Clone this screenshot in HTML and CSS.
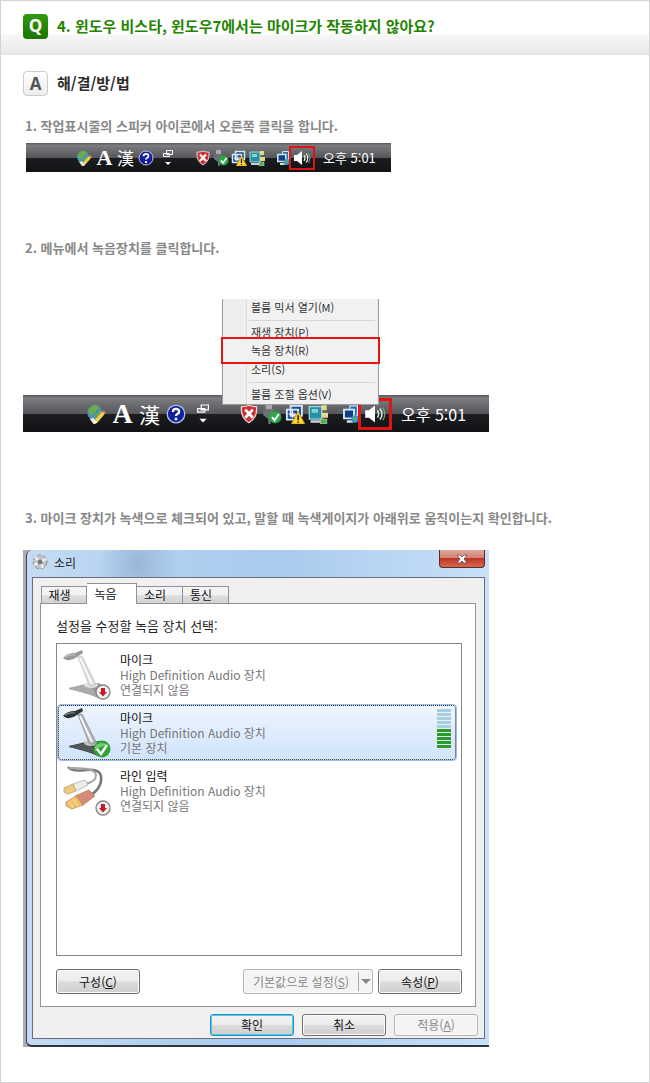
FILE: index.html
```
<!DOCTYPE html>
<html lang="ko">
<head>
    <meta charset="UTF-8">
    <meta name="viewport" content="width=device-width, initial-scale=1.0">
    <title>마이크가 작동하지 않아요?</title>
    <link rel="stylesheet" href="styles.css">
</head>
<body>
    <!-- shared icons -->
    <svg class="sprite" aria-hidden="true">
        <symbol id="globe" viewBox="0 0 16 16">
            <circle cx="7" cy="7" r="6" fill="#4a8fc4"/>
            <path d="M2 4l3-3 4 0 2 2-3 2-1 3-3 1-2-2zM8 8l4-3 1 3-3 4-3-1z" fill="#6aab4c"/>
            <path d="M3 12l3-1 3 4-3 1z" fill="#e8e4d8"/>
            <path d="M7 13l6-7 2 2-6 7-3 1z" fill="#f3cf54"/>
            <path d="M13 6l1-1 2 2-1 1z" fill="#e77c62"/>
            <path d="M7 13l2 2-3 1z" fill="#fff"/>
        </symbol>
        <symbol id="help" viewBox="0 0 16 16">
            <circle cx="8" cy="8" r="7" fill="#12209c" stroke="#b9c4e8"/>
            <path d="M5.500 6.300q0-2.500 2.500-2.500t2.500 2.200q0 1.300-1.500 2-1 .5-1 1.500" fill="none" stroke="#fff" stroke-width="1.800"/>
            <path d="M7 11h2v2H7z" fill="#fff"/>
        </symbol>
        <symbol id="toggle" viewBox="0 0 10 16">
            <path d="M3.500 .5h6v4h-6zM.5 3.500h6v3h-6z" fill="#666" stroke="#fff"/>
            <path d="M2 12h6l-3 3z" fill="#fff"/>
        </symbol>
        <symbol id="shield" viewBox="0 0 16 16">
            <path d="M8 1q3 1.500 6 1 1 9-6 13Q1 11 2 2q3 .5 6-1z" fill="#d22d33" stroke="#e9d4d4"/>
            <path d="M5 4.500l6 6.500M11 4.500L5 11" stroke="#fff" stroke-width="2.200"/>
        </symbol>
        <symbol id="usb" viewBox="0 0 16 16">
            <path d="M3 0h5v4H3z" fill="#a9a9b2"/>
            <path d="M1 4h9v5l-3 3v4H5v-4L1 9z" fill="#6d6f75"/>
            <circle cx="10.500" cy="10.500" r="5" fill="#2ba548"/>
            <path d="M8 10.500l2 2.500 3.500-5" fill="none" stroke="#fff" stroke-width="1.600"/>
        </symbol>
        <symbol id="alert" viewBox="0 0 16 16">
            <path d="M4.500 1.500h9v8h-9zM1.500 4.500h9v8h-9z" fill="#1d4b8c" stroke="#d4e8fa" stroke-width="1.500"/>
            <path d="M6 5v6M3 8h6" stroke="#fff"/>
            <path d="M10.500 6l5.500 10H5z" fill="#ffd42e" stroke="#b58300" stroke-width=".5"/>
            <path d="M10.500 9v4M10.500 14v1" stroke="#222" stroke-width="1.300"/>
        </symbol>
        <symbol id="display" viewBox="0 0 16 16">
            <path d="M1 2h10v10H1z" fill="#2691a5" stroke="#a5d6df"/>
            <path d="M3 4h5v3H3z" fill="#8ed1d3"/>
            <path d="M2 13h8v2H2z" fill="#c5d4da"/>
            <path d="M11 1h4v4h-4zM11 7h5v4h-5z" fill="#e3d98a"/>
            <path d="M10 12h5v4h-5z" fill="#5aa75a" stroke="#cbe4bd" stroke-width=".5"/>
        </symbol>
        <symbol id="network" viewBox="0 0 12 16">
            <path d="M5.500 1.500h6v8h-6z" fill="#246fae" stroke="#c8e2f2"/>
            <path d="M.8 4.500h8v7h-8z" fill="#103f83" stroke="#d7eaf5" stroke-width="1.500"/>
            <path d="M3 13h5v2H3z" fill="#cfdfe9"/>
            <circle cx="9.500" cy="12" r="3" fill="#3d92ce"/>
            <path d="M8 11l2-1 1 2-2 2z" fill="#55b25e"/>
        </symbol>
        <symbol id="speaker" viewBox="0 0 18 16">
            <path d="M1 5h3l5-4v14l-5-4H1z" fill="#fff"/>
            <path d="M11 5q2 3 0 6M13 3.500q3.500 4.500 0 9" fill="none" stroke="#dcefdc" stroke-width="1.200"/>
            <path d="M15.500 3q3 5 0 10" fill="none" stroke="#71a878"/>
        </symbol>
        <symbol id="mic" viewBox="0 0 48 50">
            <path d="M6 38l17-4 12-1 7 3-7 12q-8-4-29-9z" fill="#2c2f31"/>
            <path d="M6 38l17-3 7 4 4 8q-8-4-28-8z" fill="#55595b"/>
            <ellipse cx="28" cy="35" rx="7" ry="3" fill="#c3c7c9"/>
            <path d="M15 7l4-1 14 28q-4 4-7 1z" fill="#b0b4b5" stroke="#77797a" stroke-width=".6"/>
            <path d="M17 8l12 26" stroke="#f5f5f5" stroke-width="2"/>
            <path d="M0 8Q4 3 12 3l7-3 1 3-6 4q-8 6-14 1z" fill="#303436"/>
            <path d="M2 7q5-3 10-2" fill="none" stroke="#8c9193" stroke-width="1.200"/>
        </symbol>
        <symbol id="cable" viewBox="0 0 48 50">
            <path d="M5 1q4 5 18 3 17-2 15 11-1 8-10 14" fill="none" stroke="#777b7c" stroke-width="2.600"/>
            <path d="M6 2q26-1 27 7 0 7-11 9" fill="none" stroke="#a5a8a9" stroke-width="2"/>
            <path d="M10 18l12-4 3 5-12 6z" fill="#eceeee" stroke="#a4a5a5" stroke-width=".7"/>
            <path d="M1 22l9-4 3 7-8 3-4-2z" fill="#edcb87" stroke="#ba9355" stroke-width=".7"/>
            <path d="M12 30l14-6 6 6-12 9-6 1z" fill="#d58c7a" stroke="#b97060" stroke-width=".7"/>
            <path d="M3 36l10-6 7 9-11 4-6-3z" fill="#efc16d" stroke="#b98d48" stroke-width=".7"/>
            <path d="M6 36l4 6M10 33l5 7" stroke="#fbe6b2"/>
        </symbol>
        <symbol id="down" viewBox="0 0 16 16">
            <circle cx="8" cy="8" r="7" fill="#f0f0f0" stroke="#858585" stroke-width="1.300"/>
            <path d="M6 4h4v4h2l-4 4.500L4 8h2z" fill="#ca1925"/>
        </symbol>
        <symbol id="ok" viewBox="0 0 18 18">
            <circle cx="9" cy="9" r="8.500" fill="#2fa335"/>
            <path d="M2 6q6-6 14 0-8-1-14 5z" fill="#75ca6f"/>
            <path d="M4 9l4 5 6-9" fill="none" stroke="#fff" stroke-width="2.500"/>
        </symbol>
    </svg>

    <main class="page">
        <header class="question">
            <span class="badge badge-q">Q</span>
            <h1>4. 윈도우 비스타, 윈도우7에서는 마이크가 작동하지 않아요?</h1>
        </header>

        <section class="answer">
            <div class="answer-title">
                <span class="badge badge-a">A</span>
                <h2>해/결/방/법</h2>
            </div>

            <div class="step">
                <p>1. 작업표시줄의 스피커 아이콘에서 오른쪽 클릭을 합니다.</p>
                <div class="taskbar">
                    <div class="lang">
                        <svg><use href="#globe"/></svg>
                        <span class="latin">A</span>
                        <span class="hanja">漢</span>
                        <svg><use href="#help"/></svg>
                    </div>
                    <svg class="toggle"><use href="#toggle"/></svg>
                    <div class="tray">
                        <svg><use href="#shield"/></svg>
                        <svg><use href="#usb"/></svg>
                        <svg><use href="#alert"/></svg>
                        <svg><use href="#display"/></svg>
                    </div>
                    <svg class="network"><use href="#network"/></svg>
                    <span class="volume"><svg><use href="#speaker"/></svg></span>
                    <span class="clock">오후 5:01</span>
                </div>
            </div>

            <div class="step">
                <p>2. 메뉴에서 녹음장치를 클릭합니다.</p>
                <div class="menu-shot">
                    <ul class="menu">
                        <li>볼륨 믹서 열기(M)</li>
                        <li class="line"></li>
                        <li>재생 장치(P)</li>
                        <li class="marked">녹음 장치(R)</li>
                        <li>소리(S)</li>
                        <li class="line"></li>
                        <li>볼륨 조절 옵션(V)</li>
                    </ul>
                    <div class="taskbar large">
                        <div class="lang">
                            <svg><use href="#globe"/></svg>
                            <span class="latin">A</span>
                            <span class="hanja">漢</span>
                            <svg><use href="#help"/></svg>
                        </div>
                        <svg class="toggle"><use href="#toggle"/></svg>
                        <div class="tray">
                            <svg><use href="#shield"/></svg>
                            <svg><use href="#usb"/></svg>
                            <svg><use href="#alert"/></svg>
                            <svg><use href="#display"/></svg>
                        </div>
                        <svg class="network"><use href="#network"/></svg>
                        <span class="volume"><svg><use href="#speaker"/></svg></span>
                        <span class="clock">오후 5:01</span>
                    </div>
                </div>
            </div>

            <div class="step step-last">
                <p>3. 마이크 장치가 녹색으로 체크되어 있고, 말할 때 녹색게이지가 아래위로 움직이는지 확인합니다.</p>
                <div class="desktop">
                    <div class="window">
                        <div class="titlebar">
                            <svg class="title-icon" viewBox="0 0 16 16">
                                <circle cx="8" cy="8" r="7" fill="#c3c6c8" stroke="#8f9395" stroke-dasharray="4 2"/>
                                <path d="M8 8L3 3M8 8l6-3M8 8l3 6M8 8l-6 3" stroke="#f2f2f2" stroke-width="2"/>
                                <circle cx="8" cy="8" r="2.500" fill="#777b7d"/>
                            </svg>
                            <span class="title">소리</span>
                            <button class="close" aria-label="닫기">
                                <svg viewBox="0 0 12 10"><path d="M1 1h3l2 2 2-2h3L8 5l3 4H8L6 7 4 9H1l3-4z" fill="#fff" stroke="#58505a" stroke-width=".8"/></svg>
                            </button>
                        </div>
                        <div class="client">
                            <div class="tabs">
                                <button class="tab">재생</button>
                                <button class="tab active">녹음</button>
                                <button class="tab">소리</button>
                                <button class="tab">통신</button>
                            </div>
                            <div class="panel">
                                <div class="panel-label" id="deviceLabel">설정을 수정할 녹음 장치 선택:</div>
                                <ul class="devices" role="listbox" aria-labelledby="deviceLabel">
                                    <li class="device unplugged" role="option">
                                        <span class="device-icon">
                                            <svg class="pic"><use href="#mic"/></svg>
                                            <svg class="state"><use href="#down"/></svg>
                                        </span>
                                        <span class="device-text"><b>마이크</b>High Definition Audio 장치<br>연결되지 않음</span>
                                    </li>
                                    <li class="device selected" role="option" aria-selected="true">
                                        <span class="device-icon">
                                            <svg class="pic"><use href="#mic"/></svg>
                                            <svg class="state state-ok"><use href="#ok"/></svg>
                                        </span>
                                        <span class="device-text"><b>마이크</b>High Definition Audio 장치<br>기본 장치</span>
                                        <span class="level">
                                            <i></i><i></i><i></i><i></i><i></i>
                                            <i class="on"></i><i class="on"></i><i class="on"></i><i class="on"></i><i class="on"></i>
                                        </span>
                                    </li>
                                    <li class="device" role="option">
                                        <span class="device-icon">
                                            <svg class="pic"><use href="#cable"/></svg>
                                            <svg class="state"><use href="#down"/></svg>
                                        </span>
                                        <span class="device-text"><b>라인 입력</b>High Definition Audio 장치<br>연결되지 않음</span>
                                    </li>
                                </ul>
                                <div class="buttons">
                                    <button class="btn first">구성(<u>C</u>)</button>
                                    <button class="btn split" disabled><span class="split-text">기본값으로 설정(<u>S</u>)</span><span class="arrow"></span></button>
                                    <button class="btn">속성(<u>P</u>)</button>
                                </div>
                            </div>
                            <div class="buttons dialog-buttons">
                                <button class="btn default">확인</button>
                                <button class="btn">취소</button>
                                <button class="btn" disabled>적용(<u>A</u>)</button>
                            </div>
                        </div>
                    </div>
                </div>
            </div>
        </section>
    </main>
</body>
</html>
```
FILE: styles.css
```
* {
    box-sizing: border-box;
}

body {
    margin: 0;
    background-color: #fff;
    font-family: "Noto Sans CJK KR", sans-serif;
    font-size: 13px;
}

h1, h2, p, ul {
    margin: 0;
    padding: 0;
}

ul {
    list-style: none;
}

svg {
    display: block;
    flex: none;
}

button {
    font-family: inherit;
    padding: 0;
}

.sprite {
    position: absolute;
    width: 0;
    height: 0;
}

.page {
    min-height: 100vh;
    border: 1px solid #d3d3d3;
    padding-bottom: 34px;
}

/* Question and answer headings */
.question {
    display: flex;
    gap: 9px;
    padding: 13px 22px 15px;
    border-bottom: 1px solid #e3e3e3;
    background: linear-gradient(#fff 60%, #f6f6f6 66%, #e9e9e9);
}

.question h1 {
    font-size: 15px;
    line-height: 24px;
    color: #238400;
}

.badge {
    flex: none;
    width: 25px;
    height: 25px;
    border-radius: 4px;
    font-family: "Open Sans", sans-serif;
    font-size: 17px;
    font-weight: bold;
    line-height: 24px;
    text-align: center;
}

.badge-q {
    background: linear-gradient(#2f9a12, #1d7500);
    color: #fff;
}

.badge-a {
    border: 1px solid #ccc;
    background: linear-gradient(#fff, #ededed);
    color: #555;
}

.answer {
    padding: 16px 22px 0;
}

.answer-title {
    display: flex;
    gap: 9px;
}

.answer-title h2 {
    font-size: 15px;
    line-height: 24px;
    color: #2c2c2c;
}

.step {
    margin-top: 66px;
}

.answer-title + .step {
    margin-top: 20px;
}

.step-last {
    margin-top: 76px;
}

.step p {
    padding-left: 2px;
    line-height: 20px;
    font-weight: bold;
    color: #888;
}

/* Taskbar */
.taskbar {
    display: flex;
    align-items: center;
    max-width: 365px;
    height: 29px;
    margin: 7px 0 0 3px;
    padding-left: 50px;
    background: linear-gradient(#55575a, #7a7c7f 8%, #55575a 50%, #1b1d20 52%, #101214);
    color: #fff;
}

.lang {
    display: flex;
    align-items: center;
    gap: 4px;
}

.lang svg,
.tray svg {
    width: 16px;
    height: 16px;
}

.latin,
.hanja {
    width: 17px;
    font-size: 17px;
    line-height: 20px;
    text-align: center;
}

.latin {
    font-family: "Liberation Serif", serif;
    font-size: 22px;
    font-weight: bold;
}

.toggle {
    width: 10px;
    height: 16px;
    margin-left: 9px;
}

.tray {
    display: flex;
    gap: 2px;
    margin-left: 22px;
}

.network {
    width: 12px;
    height: 16px;
    margin-left: 12px;
}

.volume {
    display: flex;
    align-items: center;
    justify-content: center;
    width: 26px;
    height: 24px;
    border: 2px solid #e11414;
}

.volume svg {
    width: 18px;
    height: 16px;
}

.clock {
    margin-left: 8px;
    line-height: 20px;
    white-space: nowrap;
}

.taskbar.large {
    max-width: none;
    height: 37px;
    margin: 0;
    padding-left: 63px;
}

.large .lang {
    gap: 6px;
}

.large .lang svg,
.large .tray svg {
    width: 20px;
    height: 20px;
}

.large .latin,
.large .hanja {
    width: 21px;
    font-size: 21px;
}

.large .latin {
    font-size: 28px;
}

.large .toggle {
    width: 12px;
    height: 20px;
    margin-left: 11px;
}

.large .tray {
    gap: 3px;
    margin-left: 30px;
}

.large .network {
    width: 15px;
    height: 20px;
    margin-left: 15px;
}

.large .volume {
    width: 34px;
    height: 32px;
    border-width: 3px;
}

.large .volume svg {
    width: 22px;
    height: 20px;
}

.large .clock {
    margin-left: 9px;
    font-size: 16px;
}

/* Volume menu over the taskbar */
.menu-shot {
    position: relative;
    max-width: 466px;
    margin-top: 41px;
    padding-top: 96px;
}

.menu {
    position: absolute;
    top: 0;
    left: 199px;
    z-index: 1;
    width: 157px;
    padding-bottom: 2px;
    border: 1px solid #999;
    border-top: 0;
    background: linear-gradient(to right, #eee 23px, #ddd 23px, #ddd 24px, #f1f1f1 24px);
    color: #333;
}

.menu li {
    height: 16px;
    padding-left: 28px;
    font-size: 11px;
    line-height: 16px;
}

.menu .line {
    height: 1px;
    margin: 5px 3px 3px 26px;
    background-color: #d5d5d5;
}

.menu .marked {
    position: relative;
    height: 27px;
    margin: -3px -2px;
    border: 2px solid #e81313;
    background-color: #f1f1f1;
    line-height: 23px;
}

/* Sound window */
.desktop {
    max-width: 466px;
    margin-top: 22px;
    padding-left: 3px;
    background-color: #aaaeb2;
}

.window {
    padding: 0 4px 6px 5px;
    border-left: 1px solid #3a4450;
    border-bottom: 2px solid #2c3540;
    border-radius: 6px 0 0 6px;
    background:
        radial-gradient(ellipse at 24% 3%, rgba(130, 155, 190, 0.5), transparent 8%),
        linear-gradient(to right, #c5dbf2, #b0d0f1 30%, #a9cbee 55%, #c9e0f8);
}

.titlebar {
    display: flex;
    height: 27px;
}

.title-icon {
    width: 16px;
    height: 16px;
    margin-top: 4px;
}

.title {
    flex: 1;
    margin-left: 6px;
    font-size: 12px;
    line-height: 25px;
    color: #222;
}

.close {
    display: flex;
    align-items: center;
    justify-content: center;
    width: 46px;
    height: 18px;
    border: 1px solid #5e2a2a;
    border-top: 0;
    border-radius: 0 0 4px 4px;
    background: linear-gradient(#e0a79d, #d28375 45%, #bd3528 50%, #d66a50);
}

.close svg {
    width: 12px;
    height: 10px;
}

.client {
    padding: 5px 8px 2px 7px;
    border: 1px solid #66717d;
    background-color: #f0f0f0;
}

.tabs {
    display: flex;
    align-items: flex-end;
    padding-left: 1px;
    margin-bottom: -1px;
}

.tab {
    width: 46px;
    height: 18px;
    padding-right: 9px;
    border: 1px solid #8e929b;
    border-left-width: 0;
    background: linear-gradient(#f3f3f3 50%, #dddddd 55%, #d3d3d3);
    font-size: 12px;
    line-height: 16px;
    color: #111;
}

.tab:first-child {
    border-left-width: 1px;
}

.tab.active {
    position: relative;
    width: 50px;
    height: 21px;
    padding-right: 12px;
    border-bottom: 0;
    background: #fff;
    line-height: 18px;
}

.panel {
    padding: 12px 13px 12px 15px;
    border: 1px solid #8e929b;
    background-color: #fff;
}

.panel-label {
    line-height: 20px;
    color: #222;
}

.devices {
    height: 313px;
    margin-top: 7px;
    padding: 4px 5px 0 1px;
    border: 1px solid #828790;
    overflow: hidden;
}

.device {
    display: flex;
    align-items: center;
    height: 57px;
    padding: 0 5px;
}

.device.unplugged {
    padding-bottom: 4px;
}

.device.selected {
    height: 55px;
    margin: 0 0 2px;
    padding: 0 4px;
    border: 1px dotted #222;
    border-radius: 3px;
    outline: 1px solid #99bde8;
    background: linear-gradient(#eef5fe, #d0e4fc);
}

.device-icon {
    position: relative;
    width: 48px;
    height: 50px;
}

.pic {
    width: 48px;
    height: 50px;
}

.unplugged .pic {
    opacity: 0.5;
}

.state {
    position: absolute;
    right: 0;
    bottom: 0;
    width: 16px;
    height: 16px;
}

.state-ok {
    width: 18px;
    height: 18px;
}

.device-text {
    flex: 1;
    margin-left: 9px;
    font-size: 12px;
    line-height: 15px;
    color: #777;
}

.device-text b {
    display: block;
    font-weight: normal;
    color: #111;
}

.level {
    display: flex;
    flex-direction: column;
    align-self: flex-start;
    gap: 1px;
    margin-top: 3px;
}

.level i {
    width: 14px;
    height: 3px;
    background-color: #a8cfe0;
}

.level .on {
    background-color: #2b9c25;
}

.buttons {
    display: flex;
    gap: 5px;
    margin-top: 13px;
}

.btn {
    width: 84px;
    height: 25px;
    border: 1px solid #707070;
    border-radius: 3px;
    background: linear-gradient(#f4f4f4, #ebebeb 48%, #dcdcdc 52%, #cfcfcf);
    box-shadow: inset 0 0 0 1px #fafafa;
    font-size: 12px;
    line-height: 20px;
    color: #111;
}

.btn:disabled {
    border-color: #b5b5b5;
    background: #f4f4f4;
    color: #888;
}

.btn.first {
    margin-right: auto;
}

.split {
    display: flex;
    align-items: center;
    width: 130px;
}

.split-text {
    flex: 1;
}

.arrow {
    display: flex;
    align-items: center;
    justify-content: center;
    width: 14px;
    height: 19px;
    border-left: 1px solid #aaa;
}

.arrow::before {
    content: "";
    border: 5px solid transparent;
    border-top-color: #888;
    border-bottom: 0;
}

.dialog-buttons {
    justify-content: flex-end;
    gap: 8px;
    margin-top: 7px;
    margin-right: -2px;
}

.dialog-buttons .btn {
    height: 22px;
    line-height: 18px;
}

.btn.default {
    border-color: #2a8dc0;
    box-shadow: inset 0 0 0 1px #4cc8f2;
}
```
